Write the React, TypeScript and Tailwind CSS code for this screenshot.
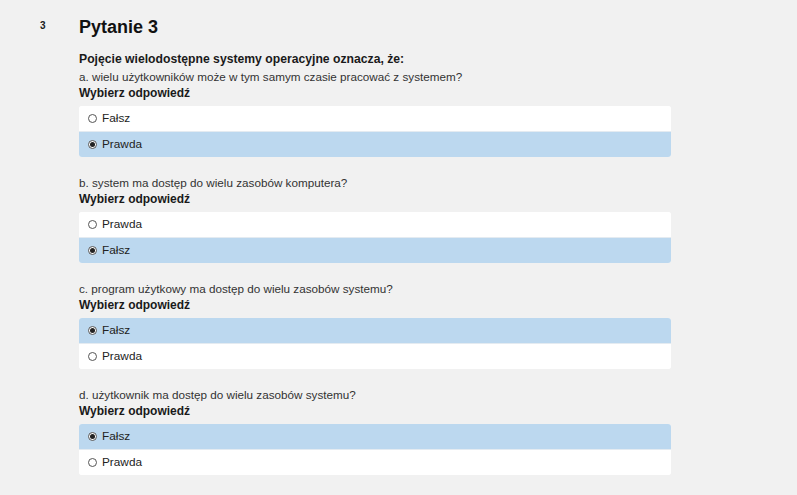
import React from "react";

type Opt = { label: string; checked: boolean };
type Part = { text: string; options: Opt[] };

const parts: Part[] = [
  { text: "a. wielu użytkowników może w tym samym czasie pracować z systemem?", options: [ { label: "Fałsz", checked: false }, { label: "Prawda", checked: true } ] },
  { text: "b. system ma dostęp do wielu zasobów komputera?", options: [ { label: "Prawda", checked: false }, { label: "Fałsz", checked: true } ] },
  { text: "c. program użytkowy ma dostęp do wielu zasobów systemu?", options: [ { label: "Fałsz", checked: true }, { label: "Prawda", checked: false } ] },
  { text: "d. użytkownik ma dostęp do wielu zasobów systemu?", options: [ { label: "Fałsz", checked: true }, { label: "Prawda", checked: false } ] },
];

function Radio({ checked }: { checked: boolean }) {
  return (
    <span className="w-[9px] h-[9px] rounded-full border border-[#555] bg-white flex items-center justify-center shrink-0">
      {checked && <span className="w-[5px] h-[5px] rounded-full bg-[#222]" />}
    </span>
  );
}

function Options({ options }: { options: Opt[] }) {
  return (
    <div className="w-[592px] rounded-[3px] overflow-hidden bg-white flex flex-col">
      {options.map((o, i) => (
        <div
          key={i}
          className={`flex items-center gap-[5px] pl-[9px] text-[#222] ${o.checked ? "bg-[#bcd8ef]" : "bg-white"} ${i > 0 ? "h-[26px] border-t border-[#e4ebf1]" : "h-[25px]"}`}
        >
          <Radio checked={o.checked} />
          <span className="text-[11.8px]">{o.label}</span>
        </div>
      ))}
    </div>
  );
}

export default function App() {
  return (
    <div className="min-h-[495px] w-[797px] bg-[#f1f1f1] text-[#1a1a1a] text-[12px] leading-[17px] flex" style={{ fontFamily: '"Liberation Sans", Arial, sans-serif' }}>
      <div className="w-[79px] shrink-0 pl-[40px] pt-[17px]">
        <span className="text-[10px] font-bold">3</span>
      </div>
      <div className="flex flex-col pt-[15px]">
        <h2 className="text-[18px] leading-[24px] font-bold text-[#111] mb-[12px]">Pytanie 3</h2>
        <p className="font-bold text-[12.2px]">Pojęcie wielodostępne systemy operacyjne oznacza, że:</p>
        {parts.map((p, i) => (
          <div key={i} className={`flex flex-col ${i > 0 ? "mt-[17px]" : ""}`}>
            <p className="text-[#333] text-[11.7px]">{p.text}</p>
            <p className="font-bold mb-[4px]">Wybierz odpowiedź</p>
            <Options options={p.options} />
          </div>
        ))}
      </div>
    </div>
  );
}
